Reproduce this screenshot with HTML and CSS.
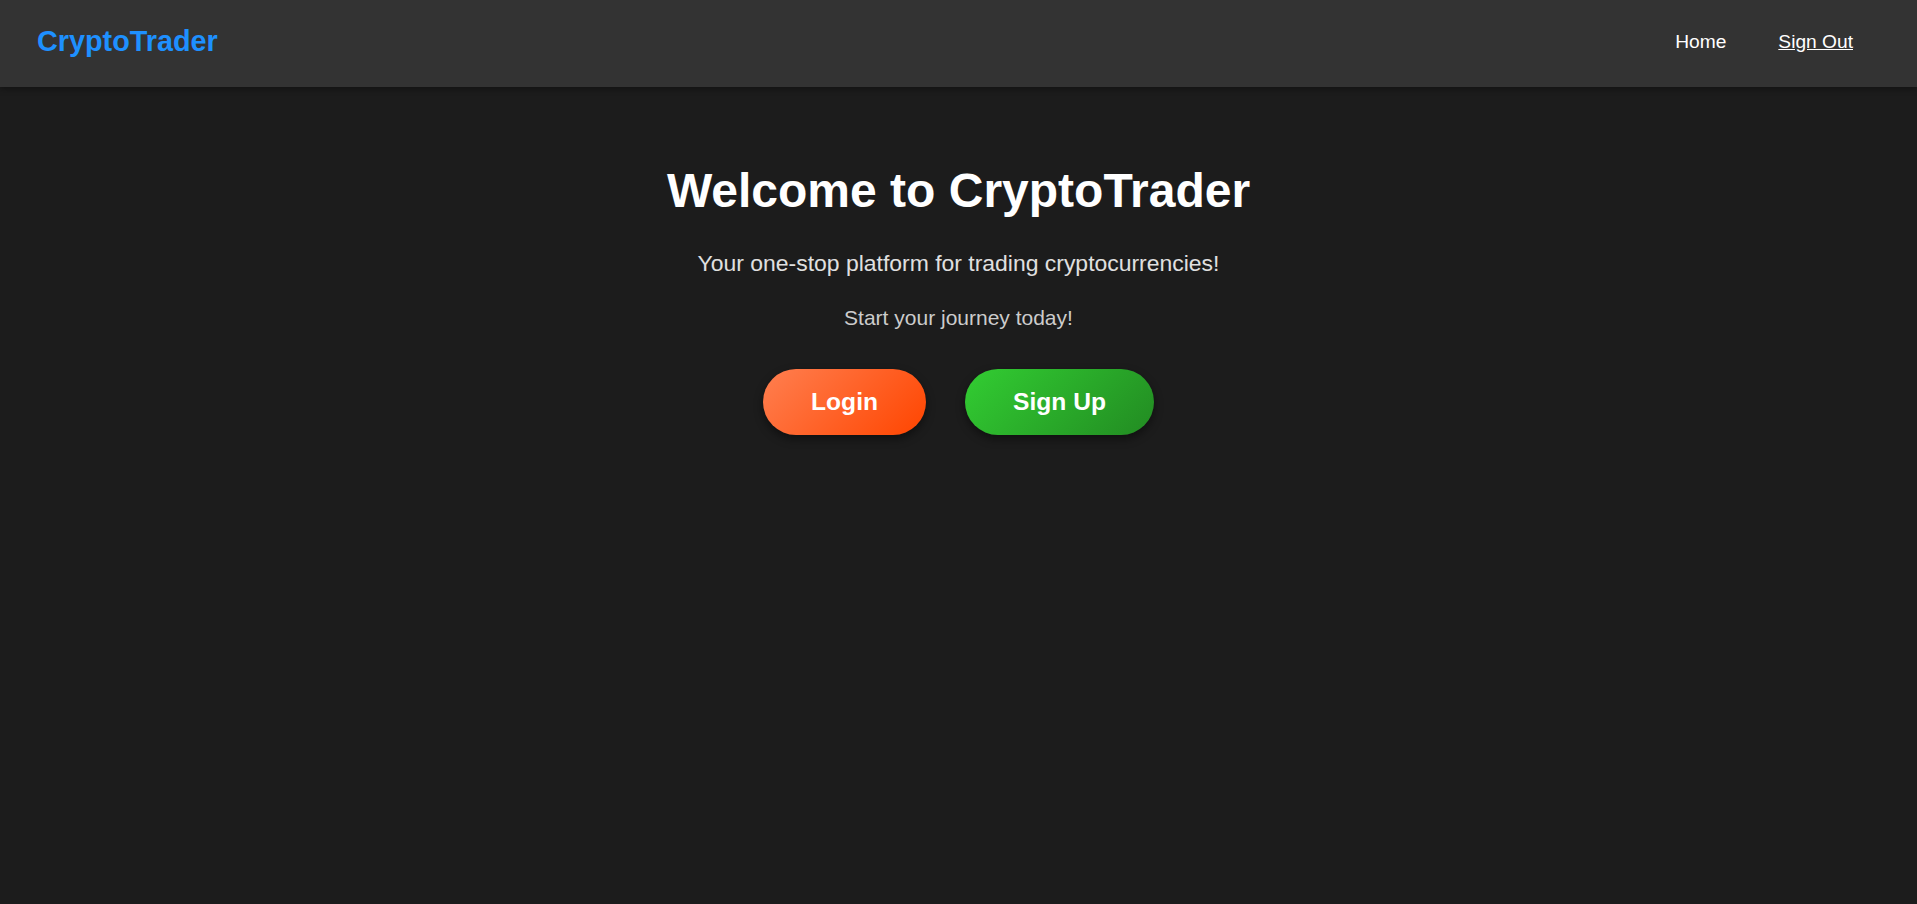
FILE: index.html
```html
<!DOCTYPE html>
<html lang="en">
<head>
<meta charset="utf-8">
<title>CryptoTrader</title>
<link rel="stylesheet" href="styles.css">
</head>
<body>
<header class="topbar">
  <div class="logo">CryptoTrader</div>
  <nav class="nav">
    <a class="nav-link" href="#">Home</a>
    <a class="nav-link nav-link--underline" href="#">Sign Out</a>
  </nav>
</header>
<main class="hero">
  <h1 class="hero-title">Welcome to CryptoTrader</h1>
  <p class="hero-sub">Your one-stop platform for trading cryptocurrencies!</p>
  <p class="hero-note">Start your journey today!</p>
  <div class="actions">
    <a class="btn btn--login" href="#">Login</a>
    <a class="btn btn--signup" href="#">Sign Up</a>
  </div>
</main>
</body>
</html>
```
FILE: styles.css
```css
* { box-sizing: border-box; }
html, body { margin: 0; padding: 0; }
body {
  background: #1c1c1c;
  color: #fff;
  font-family: "Liberation Sans", Arial, sans-serif;
  min-height: 904px;
}
.topbar {
  display: flex;
  align-items: center;
  justify-content: space-between;
  background: #333333;
  padding: 25px 38px 29px 37px;
  box-shadow: 0 2px 6px rgba(0, 0, 0, 0.35);
}
.logo {
  color: #1e90ff;
  font-size: 28.8px;
  font-weight: bold;
}
.nav {
  display: flex;
  align-items: center;
}
.nav-link {
  color: #fff;
  font-size: 19.2px;
  text-decoration: none;
  padding: 0 26px;
}
.nav-link--underline { text-decoration: underline; }
.hero {
  display: flex;
  flex-direction: column;
  align-items: center;
  padding-top: 76px;
  text-align: center;
}
.hero-title {
  margin: 0 0 32px;
  font-size: 48px;
  font-weight: bold;
  color: #fff;
}
.hero-sub {
  margin: 0 0 29px;
  font-size: 22.95px;
  color: #e0e0e0;
}
.hero-note {
  margin: 0 0 39px;
  font-size: 21px;
  color: #cccccc;
}
.actions {
  display: flex;
  gap: 39px;
}
.btn {
  display: inline-block;
  color: #fff;
  font-size: 24.6px;
  font-weight: bold;
  text-decoration: none;
  padding: 18.9px 48px;
  border-radius: 50px;
  box-shadow: 0 4px 10px rgba(0, 0, 0, 0.45);
}
.btn--login { background: linear-gradient(135deg, #ff7f50, #ff4500); }
.btn--signup { background: linear-gradient(135deg, #32cd32, #228b22); }
```
